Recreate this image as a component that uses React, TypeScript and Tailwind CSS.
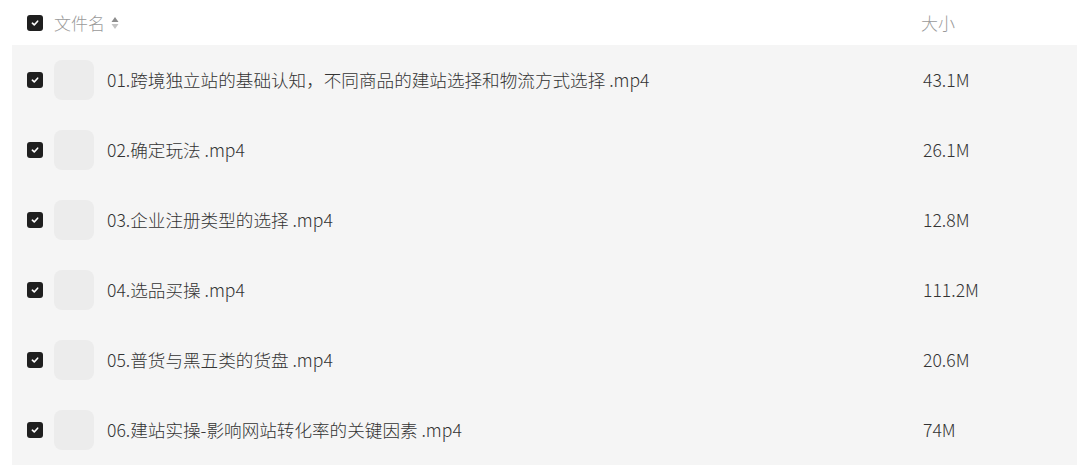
const files = [
  { name: "01.跨境独立站的基础认知，不同商品的建站选择和物流方式选择 .mp4", size: "43.1M" },
  { name: "02.确定玩法 .mp4", size: "26.1M" },
  { name: "03.企业注册类型的选择 .mp4", size: "12.8M" },
  { name: "04.选品买操 .mp4", size: "111.2M" },
  { name: "05.普货与黑五类的货盘 .mp4", size: "20.6M" },
  { name: "06.建站实操-影响网站转化率的关键因素 .mp4", size: "74M" },
];

function Check() {
  return (
    <span className="flex h-4 w-4 shrink-0 items-center justify-center rounded-[3px] bg-[#1f1f1f]">
      <svg viewBox="0 0 16 16" className="h-3 w-3" fill="none" stroke="white" strokeWidth="2.2" strokeLinecap="round" strokeLinejoin="round">
        <path d="M4.5 8.3 7 10.6 11.5 5.6" />
      </svg>
    </span>
  );
}

export default function App() {
  return (
    <div className="w-[1077px] bg-white font-['Noto_Sans_CJK_SC','Noto_Sans',sans-serif]">
      <div className="flex h-[45px] items-center pl-[27px]">
        <Check />
        <span className="ml-[11px] flex items-center text-[17px] font-light text-[#9a9a9a]">
          文件名
          <svg viewBox="0 0 8 14" className="ml-[6px] h-[14px] w-[8px]">
            <path d="M4 1 7.5 6H0.5Z" fill="#8c8c8c" />
            <path d="M4 13 7.5 8H0.5Z" fill="#c4c4c4" />
          </svg>
        </span>
        <span className="ml-auto w-[156px] text-[17px] font-light text-[#9a9a9a]">大小</span>
      </div>
      <div className="ml-3 bg-[#f5f5f5]">
        {files.map((f) => (
          <div key={f.name} className="flex h-[70px] items-center pl-[15px]">
            <Check />
            <div className="ml-[11px] h-10 w-10 shrink-0 rounded-lg bg-[#ececec]" />
            <span className="ml-[13px] flex-1 text-[17.6px] font-light text-[#333333]">{f.name}</span>
            <span className="w-[154px] text-[17.6px] font-light text-[#333333]">{f.size}</span>
          </div>
        ))}
      </div>
    </div>
  );
}
